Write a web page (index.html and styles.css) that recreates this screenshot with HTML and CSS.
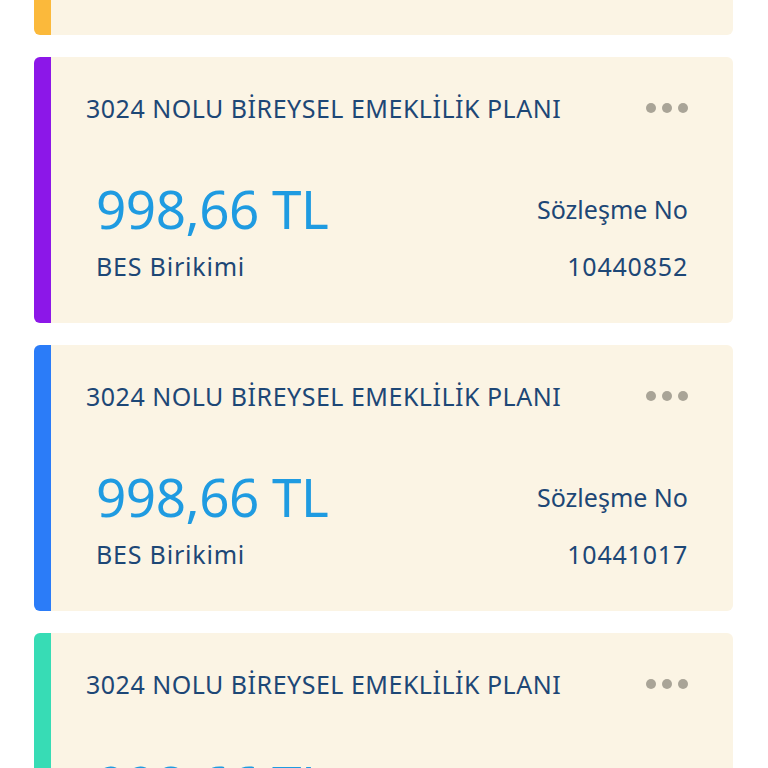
FILE: index.html
```html
<!DOCTYPE html>
<html lang="tr">

<head>
  <meta charset="UTF-8">
  <meta name="viewport" content="width=device-width, initial-scale=1.0">
  <title>Bireysel Emeklilik</title>
  <link rel="stylesheet" href="styles.css">
</head>

<body>
  <div class="plan-list">
    <div class="plan-card stripe-orange">
      <div class="plan-head">
        <span class="plan-title">3024 NOLU BİREYSEL EMEKLİLİK PLANI</span>
        <span class="more"><i></i><i></i><i></i></span>
      </div>
      <div class="plan-body">
        <div class="col">
          <div class="amount">998,66 TL</div>
          <div class="label">BES Birikimi</div>
        </div>
        <div class="col right">
          <div class="contract">Sözleşme No</div>
          <div class="label">10440601</div>
        </div>
      </div>
    </div>

    <div class="plan-card stripe-purple">
      <div class="plan-head">
        <span class="plan-title">3024 NOLU BİREYSEL EMEKLİLİK PLANI</span>
        <span class="more"><i></i><i></i><i></i></span>
      </div>
      <div class="plan-body">
        <div class="col">
          <div class="amount">998,66 TL</div>
          <div class="label">BES Birikimi</div>
        </div>
        <div class="col right">
          <div class="contract">Sözleşme No</div>
          <div class="label">10440852</div>
        </div>
      </div>
    </div>

    <div class="plan-card stripe-blue">
      <div class="plan-head">
        <span class="plan-title">3024 NOLU BİREYSEL EMEKLİLİK PLANI</span>
        <span class="more"><i></i><i></i><i></i></span>
      </div>
      <div class="plan-body">
        <div class="col">
          <div class="amount">998,66 TL</div>
          <div class="label">BES Birikimi</div>
        </div>
        <div class="col right">
          <div class="contract">Sözleşme No</div>
          <div class="label">10441017</div>
        </div>
      </div>
    </div>

    <div class="plan-card stripe-green">
      <div class="plan-head">
        <span class="plan-title">3024 NOLU BİREYSEL EMEKLİLİK PLANI</span>
        <span class="more"><i></i><i></i><i></i></span>
      </div>
      <div class="plan-body">
        <div class="col">
          <div class="amount">998,66 TL</div>
          <div class="label">BES Birikimi</div>
        </div>
        <div class="col right">
          <div class="contract">Sözleşme No</div>
          <div class="label">10441233</div>
        </div>
      </div>
    </div>
  </div>
</body>

</html>
```

FILE: styles.css
```css
:root {
  --card-bg: #fbf4e4;
  --navy: #1d4776;
  --amount: #1f9be1;
  --dots: #a9a497;
}

body {
  margin: 0;
  background-color: #ffffff;
  font-family: 'Noto Sans', 'Open Sans', sans-serif;
  overflow: hidden;
}

/* liste biraz kaydırılmış görünüyor */
.plan-list {
  display: flex;
  flex-direction: column;
  gap: 22px;
  padding: 0 35px 0 34px;
  margin-top: -231px;
}

.plan-card {
  height: 266px;
  box-sizing: border-box;
  background-color: var(--card-bg);
  border-left: 17px solid;
  border-radius: 6px;
  padding: 0 45px 0 35px;
  display: flex;
  flex-direction: column;
}

.stripe-orange { border-left-color: #fbb93b; }
.stripe-purple { border-left-color: #8c17e8; }
.stripe-blue { border-left-color: #2b7cf8; }
.stripe-green { border-left-color: #37dcb5; }

.plan-head {
  display: flex;
  justify-content: space-between;
  align-items: center;
  height: 102px;
}

.plan-title {
  color: var(--navy);
  font-size: 25px;
  letter-spacing: 0.5px;
}

.more {
  display: flex;
  gap: 6px;
}

.more i {
  width: 10px;
  height: 10px;
  border-radius: 50%;
  background-color: var(--dots);
}

.plan-body {
  display: flex;
  justify-content: space-between;
  padding: 18px 0 0 10px;
}

.col {
  display: flex;
  flex-direction: column;
}

.col.right {
  align-items: flex-end;
}

.amount {
  color: var(--amount);
  font-size: 53px;
  line-height: 64px;
  letter-spacing: -0.5px;
}

.contract {
  color: var(--navy);
  font-size: 25px;
  line-height: 64px;
}

.label {
  color: var(--navy);
  font-size: 25px;
  line-height: 36px;
  margin-top: 7px;
  letter-spacing: 0.8px;
}
```
